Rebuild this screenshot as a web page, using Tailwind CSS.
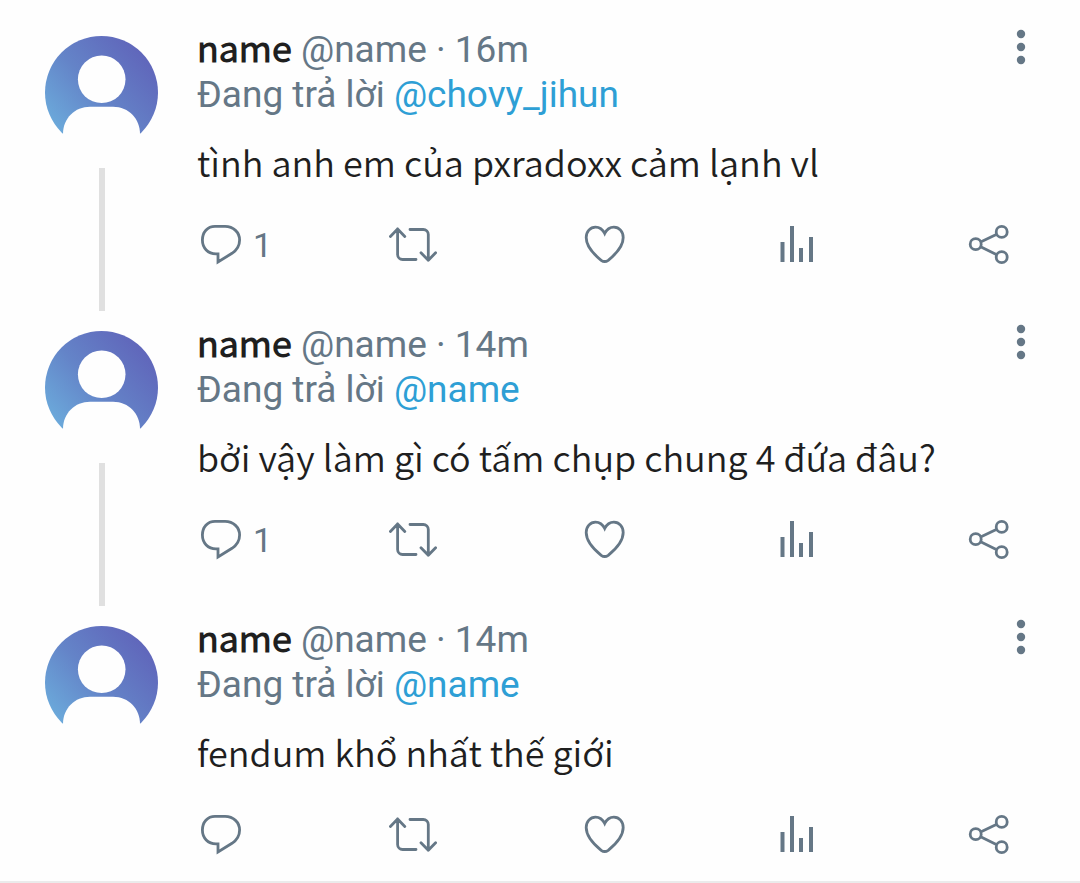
<!DOCTYPE html>
<html lang="vi">
<head>
    <meta charset="UTF-8">
    <meta name="viewport" content="width=device-width, initial-scale=1.0">
    <title>Chuỗi trả lời</title>
    <script src="https://cdn.jsdelivr.net/npm/@tailwindcss/browser@4"></script>
</head>
<body class="bg-[#fefefe] font-['Roboto',sans-serif] text-[#657786]">
    <!-- Icon dùng chung -->
    <svg class="absolute w-0 h-0" aria-hidden="true">
        <defs>
            <linearGradient id="avatarBg" x1="0" y1="0.8" x2="0.8" y2="0.1">
                <stop offset="0" stop-color="#6caedd"/>
                <stop offset="0.5" stop-color="#6484c8"/>
                <stop offset="1" stop-color="#6067bb"/>
            </linearGradient>
            <symbol id="avatar" viewBox="0 0 113 113">
                <circle cx="56.5" cy="56.5" r="56.5" fill="url(#avatarBg)"/>
                <circle cx="56.7" cy="43.3" r="23.8" fill="#fefefe"/>
                <path d="M18 114V98C18 82 30 70.7 45 70.7H68C84 70.7 95 83 95 98V114Z" fill="#fefefe"/>
            </symbol>
            <symbol id="reply" viewBox="0 0 48 40">
                <path d="M18 1.4H28C36.5 1.4 42.6 7.5 42.6 15C42.6 21 39.5 25.3 35 28.3L21 37V28.8H19C11 28.8 5.4 23 5.4 15C5.4 7.2 10.5 1.4 18 1.4Z" fill="none" stroke="currentColor" stroke-width="2.8"/>
            </symbol>
            <symbol id="retweet" viewBox="0 0 48 40">
                <path d="M1.4 11.4L8.6 4L15.8 11.4M8.6 4V29.5A5 5 0 0 0 13.6 34.5H27M21 4.5H34.3A5 5 0 0 1 39.3 9.5V35.3M32 27.8L39.3 35.3L46.6 27.8" fill="none" stroke="currentColor" stroke-width="2.8" stroke-linecap="round" stroke-linejoin="round"/>
            </symbol>
            <symbol id="like" viewBox="0 0 48 40">
                <path d="M23.7 8.5C21.5 4 18 2.1 14.5 2.1C9.2 2.1 5.2 6.6 5.2 12.5C5.2 21 13 29.5 20.2 35.3C22.6 37 24.8 37 27.2 35.3C34.4 29.5 42.2 21 42.2 12.5C42.2 6.6 38.2 2.1 32.9 2.1C29.4 2.1 25.9 4 23.7 8.5Z" fill="none" stroke="currentColor" stroke-width="2.8"/>
            </symbol>
            <symbol id="stats" viewBox="0 0 48 40">
                <path d="M7.5 17h4v20h-4zM17 1h4v36h-4zM26 23h4v14h-4zM36 12h4v25h-4z" fill="currentColor"/>
            </symbol>
            <symbol id="share" viewBox="0 0 48 40">
                <g fill="none" stroke="currentColor" stroke-width="2.8">
                    <circle cx="10.7" cy="19.2" r="5.5"/>
                    <circle cx="36.7" cy="6.9" r="5.5"/>
                    <circle cx="36.7" cy="32.2" r="5.5"/>
                    <path d="M15.6 16.9L31.8 9.2M15.6 21.7L31.8 29.7"/>
                </g>
            </symbol>
            <symbol id="more" viewBox="0 0 12 36">
                <circle cx="6" cy="5" r="4.2" fill="currentColor"/>
                <circle cx="6" cy="18" r="4.2" fill="currentColor"/>
                <circle cx="6" cy="31" r="4.2" fill="currentColor"/>
            </symbol>
        </defs>
    </svg>

    <main class="pt-4 border-b-3 border-[#ebebeb]">
        <!-- Tweet 1 -->
        <article class="flex gap-[39px] pl-[45px]">
            <div class="flex flex-col items-center shrink-0 pt-5">
                <svg class="w-[113px] h-[113px]" role="img" aria-label="name"><use href="#avatar"/></svg>
                <div class="w-[6px] grow mt-[19px] bg-[#e0e0e0]"></div>
            </div>
            <div class="grow min-w-0 pt-[11px] pb-[46px]">
                <div class="flex justify-between pr-[53px] text-[37px] leading-[45px]">
                    <div>
                        <p><b class="font-['Noto_Sans_CJK_KR_DemiLight','Noto_Sans_CJK_KR',sans-serif] font-bold text-[36px] leading-none text-[#1f1f1f]">name</b> @name · 16m</p>
                        <p>Đang trả lời <a href="#chovy_jihun" class="text-[#2e9fd5]">@chovy_jihun</a></p>
                    </div>
                    <button type="button" class="self-start mt-[2px]" aria-label="Thêm"><svg class="w-3 h-9"><use href="#more"/></svg></button>
                </div>
                <p class="mt-[22px] font-['Noto_Sans_CJK_KR_DemiLight','Noto_Sans_CJK_KR',sans-serif] font-[350] text-[36px] leading-[45px] text-[#1f1f1f]">tình anh em của pxradoxx cảm lạnh vl</p>
                <div class="flex justify-between mt-[41px] pr-[67px]">
                    <button type="button" class="flex items-center gap-2 w-12 h-10 text-[34px]" aria-label="Trả lời"><svg class="w-12 h-10 shrink-0"><use href="#reply"/></svg><span>1</span></button>
                    <button type="button" aria-label="Tweet lại"><svg class="w-12 h-10"><use href="#retweet"/></svg></button>
                    <button type="button" aria-label="Thích"><svg class="w-12 h-10"><use href="#like"/></svg></button>
                    <button type="button" aria-label="Thống kê"><svg class="w-12 h-10"><use href="#stats"/></svg></button>
                    <button type="button" aria-label="Chia sẻ"><svg class="w-12 h-10"><use href="#share"/></svg></button>
                </div>
            </div>
        </article>

        <!-- Tweet 2 -->
        <article class="flex gap-[39px] pl-[45px]">
            <div class="flex flex-col items-center shrink-0 pt-5">
                <svg class="w-[113px] h-[113px]" role="img" aria-label="name"><use href="#avatar"/></svg>
                <div class="w-[6px] grow mt-[19px] bg-[#e0e0e0]"></div>
            </div>
            <div class="grow min-w-0 pt-[11px] pb-[46px]">
                <div class="flex justify-between pr-[53px] text-[37px] leading-[45px]">
                    <div>
                        <p><b class="font-['Noto_Sans_CJK_KR_DemiLight','Noto_Sans_CJK_KR',sans-serif] font-bold text-[36px] leading-none text-[#1f1f1f]">name</b> @name · 14m</p>
                        <p>Đang trả lời <a href="#name" class="text-[#2e9fd5]">@name</a></p>
                    </div>
                    <button type="button" class="self-start mt-[2px]" aria-label="Thêm"><svg class="w-3 h-9"><use href="#more"/></svg></button>
                </div>
                <p class="mt-[22px] font-['Noto_Sans_CJK_KR_DemiLight','Noto_Sans_CJK_KR',sans-serif] font-[350] text-[36px] leading-[45px] text-[#1f1f1f]">bởi vậy làm gì có tấm chụp chung 4 đứa đâu?</p>
                <div class="flex justify-between mt-[41px] pr-[67px]">
                    <button type="button" class="flex items-center gap-2 w-12 h-10 text-[34px]" aria-label="Trả lời"><svg class="w-12 h-10 shrink-0"><use href="#reply"/></svg><span>1</span></button>
                    <button type="button" aria-label="Tweet lại"><svg class="w-12 h-10"><use href="#retweet"/></svg></button>
                    <button type="button" aria-label="Thích"><svg class="w-12 h-10"><use href="#like"/></svg></button>
                    <button type="button" aria-label="Thống kê"><svg class="w-12 h-10"><use href="#stats"/></svg></button>
                    <button type="button" aria-label="Chia sẻ"><svg class="w-12 h-10"><use href="#share"/></svg></button>
                </div>
            </div>
        </article>

        <!-- Tweet 3 -->
        <article class="flex gap-[39px] pl-[45px]">
            <div class="flex flex-col items-center shrink-0 pt-5">
                <svg class="w-[113px] h-[113px]" role="img" aria-label="name"><use href="#avatar"/></svg>
            </div>
            <div class="grow min-w-0 pt-[11px] pb-[26px]">
                <div class="flex justify-between pr-[53px] text-[37px] leading-[45px]">
                    <div>
                        <p><b class="font-['Noto_Sans_CJK_KR_DemiLight','Noto_Sans_CJK_KR',sans-serif] font-bold text-[36px] leading-none text-[#1f1f1f]">name</b> @name · 14m</p>
                        <p>Đang trả lời <a href="#name" class="text-[#2e9fd5]">@name</a></p>
                    </div>
                    <button type="button" class="self-start mt-[2px]" aria-label="Thêm"><svg class="w-3 h-9"><use href="#more"/></svg></button>
                </div>
                <p class="mt-[22px] font-['Noto_Sans_CJK_KR_DemiLight','Noto_Sans_CJK_KR',sans-serif] font-[350] text-[36px] leading-[45px] text-[#1f1f1f]">fendum khổ nhất thế giới</p>
                <div class="flex justify-between mt-[41px] pr-[67px]">
                    <button type="button" aria-label="Trả lời"><svg class="w-12 h-10"><use href="#reply"/></svg></button>
                    <button type="button" aria-label="Tweet lại"><svg class="w-12 h-10"><use href="#retweet"/></svg></button>
                    <button type="button" aria-label="Thích"><svg class="w-12 h-10"><use href="#like"/></svg></button>
                    <button type="button" aria-label="Thống kê"><svg class="w-12 h-10"><use href="#stats"/></svg></button>
                    <button type="button" aria-label="Chia sẻ"><svg class="w-12 h-10"><use href="#share"/></svg></button>
                </div>
            </div>
        </article>
    </main>
</body>
</html>
